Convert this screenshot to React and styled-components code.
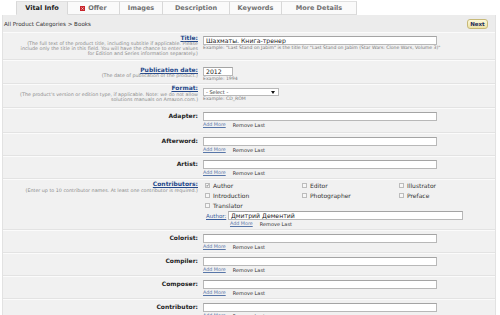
import React from 'react'
import styled, {createGlobalStyle} from 'styled-components'

const GlobalStyle = createGlobalStyle`
	body {
		margin: 0;
		background: #fff;
		font-family: "DejaVu Sans", Verdana, sans-serif;
	}
`

const Page = styled.div`
	width: 500px;
	height: 315px;
	overflow: hidden;
`
const TabBar = styled.div`
	display: flex;
	height: 15px;
	padding: 1px 0 0 16px;
	box-sizing: border-box;
`
const Tab = styled.div`
	width: ${p => p.$w}px;
	height: 14px;
	box-sizing: border-box;
	display: flex;
	align-items: center;
	justify-content: center;
	gap: 3px;
	font-size: 6.5px;
	font-weight: bold;
	color: ${p => p.$active ? '#1a1a1a' : '#707070'};
	background: ${p => p.$active ? '#ececec' : '#fafafa'};
	border-top: 1px solid #e0e0e0;
	border-right: 1px solid #d8d8d8;
	border-bottom: 1px solid ${p => p.$active ? '#ececec' : '#dcdcdc'};
	&:first-child {
		border-left: 1px solid #d8d8d8;
	}
`
const Panel = styled.div`
	margin: 0 4px 0 2px;
	border-left: 1px solid #e2e2e2;
	border-right: 1px solid #e2e2e2;
`
const Crumb = styled.div`
	height: 17px;
	box-sizing: border-box;
	display: flex;
	justify-content: space-between;
	align-items: center;
	padding: 0 7px 0 1px;
	background: #ececec;
	font-size: 5.6px;
	color: #333;
`
const NextButton = styled.div`
	width: 21px;
	height: 10px;
	box-sizing: border-box;
	display: flex;
	align-items: center;
	justify-content: center;
	font-size: 5.5px;
	font-weight: bold;
	color: #1d2b58;
	border: 1px solid #c7b978;
	border-radius: 3px;
	background: linear-gradient(#fdf9dc, #ece1a4);
`
const Row = styled.div`
	display: grid;
	grid-template-columns: 197px 1fr;
	height: ${p => p.$h}px;
	box-sizing: border-box;
	background: #f1f1f1;
	border-top: 1px solid #fbfbfb;
	border-bottom: 1px solid #e3e3e3;
	overflow: hidden;
`
const LabelCell = styled.div`
	text-align: right;
	padding: ${p => p.$pt}px 2px 0 0;
`
const FieldCell = styled.div`
	padding: ${p => p.$pt}px 0 0 3px;
`
const Label = styled.div`
	font-size: 6px;
	font-weight: bold;
	line-height: ${p => p.$lh || 6.5}px;
	color: ${p => p.$link ? '#24488a' : '#1e1e1e'};
	text-decoration: ${p => p.$link ? 'underline' : 'none'};
`
const Hint = styled.div`
	font-size: 4.8px;
	line-height: 5px;
	color: #8a8a8a;
	white-space: nowrap;
`
const TextInput = styled.input`
	display: block;
	width: ${p => p.$w}px;
	height: 9px;
	box-sizing: border-box;
	margin: 0;
	padding: 0 2px;
	border: 1px solid #b8b8b8;
	border-top-color: #a4a4a4;
	background: #fff;
	font-family: "DejaVu Sans", Verdana, sans-serif;
	font-size: 6.2px;
	color: #222;
	outline: none;
`
const FakeSelect = styled.div`
	width: 76px;
	height: 8px;
	box-sizing: border-box;
	display: flex;
	align-items: center;
	justify-content: space-between;
	padding: 0 3px 0 2px;
	border: 1px solid #b8b8b8;
	background: #fff;
	font-size: 5px;
	color: #333;
`
const Example = styled.div`
	font-size: 4.6px;
	line-height: ${p => p.$lh || 6}px;
	color: #777;
	white-space: nowrap;
`
const Links = styled.div`
	display: flex;
	gap: 7px;
	line-height: 8px;
	padding-left: ${p => p.$pl || 0}px;
`
const AddMore = styled.span`
	font-size: 4.8px;
	color: #5876a8;
	text-decoration: underline;
`
const RemoveLast = styled.span`
	font-size: 5px;
	color: #333;
`
const CheckGrid = styled.div`
	display: grid;
	grid-template-columns: repeat(3, 97px);
	padding-left: 2px;
`
const CheckItem = styled.div`
	display: flex;
	align-items: center;
	gap: 3px;
	height: 10px;
	font-size: 6px;
	color: #333;
`
const Box = styled.span`
	width: 5px;
	height: 5px;
	box-sizing: border-box;
	display: flex;
	align-items: center;
	justify-content: center;
	border: 1px solid #bcbcbc;
	background: #f6f6f6;
`
const AuthorLine = styled.div`
	display: grid;
	grid-template-columns: 25px 235px;
	align-items: center;
	margin-top: 1px;
`
const AuthorLink = styled.span`
	padding-left: 3px;
	font-size: 5.5px;
	color: #3a5d9c;
	text-decoration: underline;
`

const ErrorIcon = ()=>
	<svg width="5" height="5" viewBox="0 0 5 5">
		<rect x="0" y="0" width="5" height="5" fill="#c8242b"/>
		<path d="M1.4 1.4 L3.6 3.6 M3.6 1.4 L1.4 3.6" stroke="#f6c9c9" strokeWidth="0.8"/>
	</svg>

const Check = ()=>
	<svg width="5" height="5" viewBox="0 0 5 5">
		<path d="M0.6 2.6 L1.9 3.9 L4.4 0.8" stroke="#222" strokeWidth="0.9" fill="none"/>
	</svg>

const tabs = [
	{name: 'Vital Info', w: 52, active: true},
	{name: 'Offer', w: 52, error: true},
	{name: 'Images', w: 43},
	{name: 'Description', w: 67},
	{name: 'Keywords', w: 52},
	{name: 'More Details', w: 75},
]

const checks = [
	['Author', true], ['Editor'], ['Illustrator'],
	['Introduction'], ['Photographer'], ['Preface'],
	['Translator'],
]

const LinkPair = ({pl})=>
	<Links $pl={pl}>
		<AddMore>Add More</AddMore>
		<RemoveLast>Remove Last</RemoveLast>
	</Links>

const SimpleRow = ({label, h = 23})=>
	<Row $h={h}>
		<LabelCell $pt={3}><Label $lh={8}>{label}:</Label></LabelCell>
		<FieldCell $pt={3}>
			<TextInput $w={234} defaultValue=""/>
			<LinkPair/>
		</FieldCell>
	</Row>

const App = ()=>{
	return <>
		<GlobalStyle/>
		<Page>
			<TabBar>
				{tabs.map(tab=>
					<Tab key={tab.name} $w={tab.w} $active={tab.active}>
						{tab.error && <ErrorIcon/>}
						{tab.name}
					</Tab>
				)}
			</TabBar>
			<Panel>
				<Crumb>
					<span>All Product Categories &gt; Books</span>
					<NextButton>Next</NextButton>
				</Crumb>

				<Row $h={28}>
					<LabelCell $pt={1.5}>
						<Label $link>Title:</Label>
						<Hint>(The full text of the product title, including subtitle if applicable. Please<br/>
						include only the title in this field. You will have the chance to enter values<br/>
						for Edition and Series information separately.)</Hint>
					</LabelCell>
					<FieldCell $pt={3}>
						<TextInput $w={234} defaultValue="Шахматы. Книга-тренер"/>
						<Example>Example: "Last Stand on Jabim" is the title for "Last Stand on Jabim (Star Wars: Clone Wars, Volume 3)"</Example>
					</FieldCell>
				</Row>

				<Row $h={24}>
					<LabelCell $pt={5.5}>
						<Label $link>Publication date:</Label>
						<Hint>(The date of publication of the product.)</Hint>
					</LabelCell>
					<FieldCell $pt={6}>
						<TextInput $w={30} defaultValue="2012"/>
						<Example>Example: 1994</Example>
					</FieldCell>
				</Row>

				<Row $h={24}>
					<LabelCell $pt={0}>
						<Label $link>Format:</Label>
						<Hint>(The product's version or edition type, if applicable. Note: we do not allow<br/>
						solutions manuals on Amazon.com.)</Hint>
					</LabelCell>
					<FieldCell $pt={3}>
						<FakeSelect>
							<span>- Select -</span>
							<svg width="4" height="3" viewBox="0 0 4 3"><path d="M0 0 H4 L2 3 Z" fill="#111"/></svg>
						</FakeSelect>
						<Example $lh={5}>Example: CD_ROM</Example>
					</FieldCell>
				</Row>

				<SimpleRow label="Adapter" h={25}/>
				<SimpleRow label="Afterword"/>
				<SimpleRow label="Artist"/>

				<Row $h={51}>
					<LabelCell $pt={1}>
						<Label $link>Contributors:</Label>
						<Hint>(Enter up to 10 contributor names. At least one contributor is required.)</Hint>
					</LabelCell>
					<FieldCell $pt={0}>
						<CheckGrid>
							{checks.map(([name, on])=>
								<CheckItem key={name}>
									<Box>{on && <Check/>}</Box>
									{name}
								</CheckItem>
							)}
						</CheckGrid>
						<AuthorLine>
							<AuthorLink>Author:</AuthorLink>
							<TextInput $w={235} defaultValue="Дмитрий Дементий"/>
							<span/>
							<LinkPair pl={2}/>
						</AuthorLine>
					</FieldCell>
				</Row>

				<SimpleRow label="Colorist"/>
				<SimpleRow label="Compiler"/>
				<SimpleRow label="Composer"/>
				<SimpleRow label="Contributor"/>
			</Panel>
		</Page>
	</>
}
export default App
